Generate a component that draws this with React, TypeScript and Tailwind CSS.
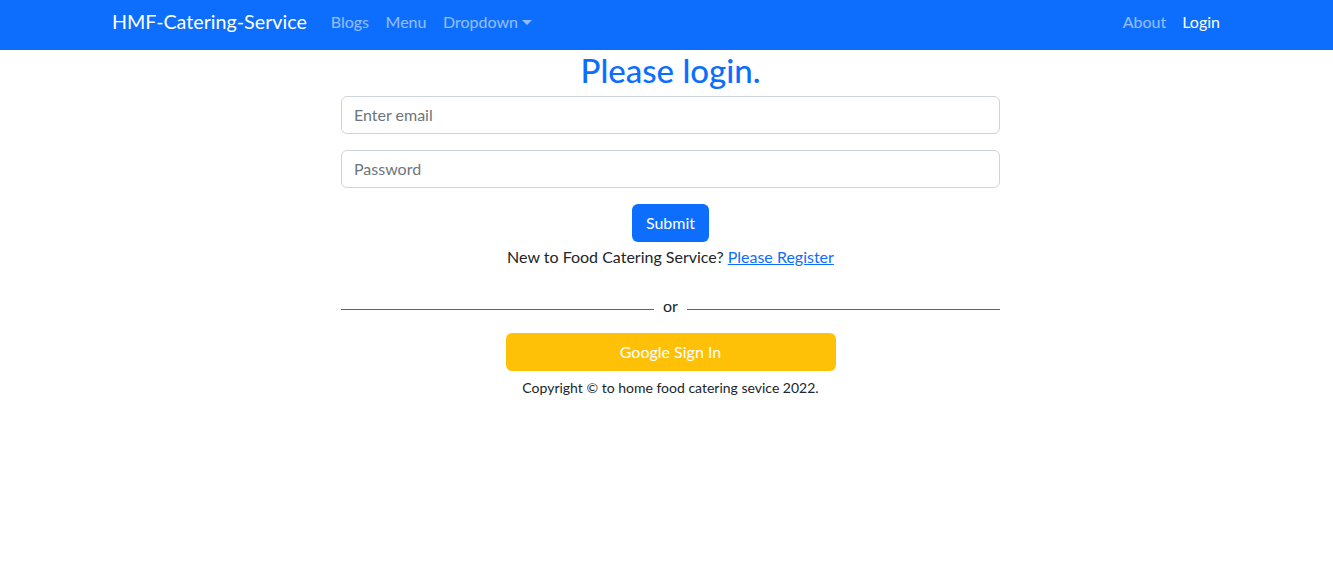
import React from "react";

const font = { fontFamily: 'Lato, "Noto Sans", sans-serif' };

export default function App() {
  return (
    <div className="min-h-[570px] bg-white text-[#212529]" style={font}>
      <nav className="h-[50px] bg-[#0d6efd]">
        <div className="flex h-full justify-center pl-[7px]">
          <div className="flex h-full w-[1140px] items-center px-3 pb-[6px]">
            <span className="mr-4 text-[19.7px] leading-[30px] text-white">HMF-Catering-Service</span>
            <div className="flex items-center text-[16px] text-white/55">
              <span className="px-2">Blogs</span>
              <span className="px-[8.5px]">Menu</span>
              <span className="flex items-center px-2">
                Dropdown
                <span className="ml-[4px] mt-[1px] inline-block h-0 w-0 border-x-[5px] border-t-[5px] border-x-transparent border-t-white/55" />
              </span>
            </div>
            <div className="ml-auto flex items-center text-[16px]">
              <span className="px-2 text-white/55">About</span>
              <span className="px-2 text-white">Login</span>
            </div>
          </div>
        </div>
      </nav>
      <div className="flex justify-center pl-[8px]">
        <main className="flex w-[659px] flex-col items-center">
          <h2 className="mt-[1px] text-[33px] font-medium leading-[38px] text-[#0d6efd]">Please login.</h2>
          <div className="mt-[7px] flex h-[38px] w-full items-center rounded-[6px] border border-[#ced4da] px-3 text-[16px] text-[#6c757d]">Enter email</div>
          <div className="mt-4 flex h-[38px] w-full items-center rounded-[6px] border border-[#ced4da] px-3 text-[16px] text-[#6c757d]">Password</div>
          <button className="mt-4 h-[38px] rounded-[6px] bg-[#0d6efd] px-[14px] text-[16px] text-white">Submit</button>
          <p className="mt-[3px] text-[16px] leading-[24px]">
            New to Food Catering Service? <span className="text-[#0d6efd] underline">Please Register</span>
          </p>
          <div className="mt-[27px] flex w-full items-center">
            <div className="h-px flex-1 bg-[#0d6efd]" />
            <span className="px-[9px] pb-[6px] text-[16px] leading-[20px]">or</span>
            <div className="h-px flex-1 bg-[#0d6efd]" />
          </div>
          <button className="mt-[11px] h-[38px] w-[330px] rounded-[6px] bg-[#ffc107] text-[16px] text-white">Google Sign In</button>
          <p className="mt-[6px] text-[14px] leading-[21px]">Copyright © to home food catering sevice 2022.</p>
        </main>
      </div>
    </div>
  );
}
